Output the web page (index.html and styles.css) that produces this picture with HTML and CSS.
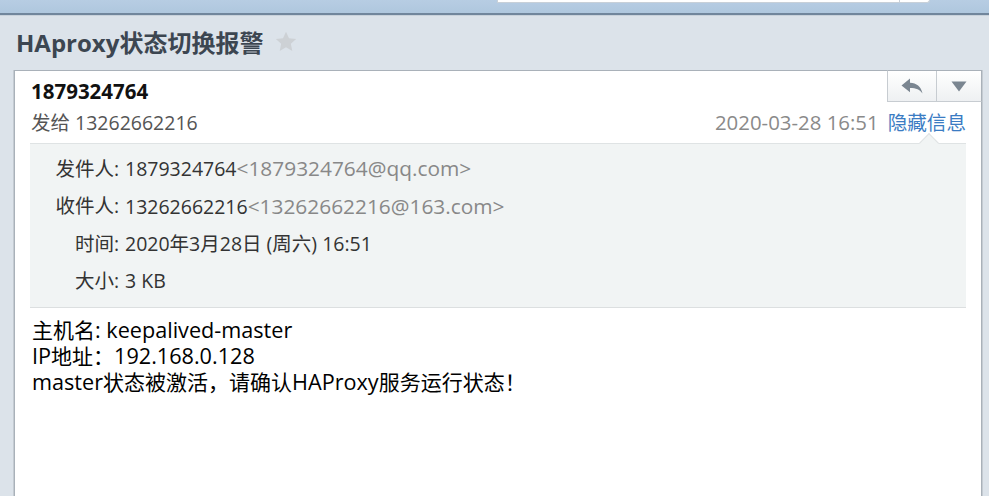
FILE: index.html
```html
<!DOCTYPE html>
<html lang="zh-CN">
<head>
<meta charset="utf-8">
<title>HAproxy状态切换报警</title>
<link rel="stylesheet" href="styles.css">
</head>
<body>
<div class="topbar">
  <div class="search"><span class="search-btn"></span></div>
</div>
<div class="subject-row">
  <h1 class="subject">HAproxy状态切换报警</h1>
  <svg class="star" width="22" height="21" viewBox="0 0 24 23"><path d="M12 0.8l3.3 7.1 7.8 0.9-5.8 5.3 1.6 7.7L12 17.9l-6.9 3.9 1.6-7.7L0.9 8.8l7.8-0.9z" fill="#cdd1d5"/></svg>
</div>
<div class="card">
  <div class="actions">
    <span class="act act-reply">
      <svg width="22" height="16" viewBox="0 0 22 16"><path d="M0.5 7.5L9 0.5v4.2c6.5 0.3 11 3.6 12.5 10.8-2.6-4-6.4-5.6-12.5-5.6v4.3z" fill="#7b8691"/></svg>
    </span>
    <span class="act act-more">
      <svg width="16" height="11" viewBox="0 0 16 11"><path d="M0.5 0.5h15L8 10.5z" fill="#7b8691"/></svg>
    </span>
  </div>
  <div class="from">1879324764</div>
  <div class="meta">
    <span class="to">发给 13262662216</span>
    <span class="meta-right"><span class="date">2020-03-28 16:51</span><a class="toggle">隐藏信息</a></span>
  </div>
  <div class="details">
    <span class="pointer"></span>
    <div class="row"><span class="lbl">发件人:</span><span class="val">1879324764<span class="addr">&lt;1879324764@qq.com&gt;</span></span></div>
    <div class="row"><span class="lbl">收件人:</span><span class="val">13262662216<span class="addr">&lt;13262662216@163.com&gt;</span></span></div>
    <div class="row"><span class="lbl">时间:</span><span class="val">2020年3月28日 (周六) 16:51</span></div>
    <div class="row"><span class="lbl">大小:</span><span class="val">3 KB</span></div>
  </div>
  <div class="content">
    <div>主机名<span class="en">: keepalived-master</span></div>
    <div><span class="en">IP</span>地址：<span class="en">192.168.0.128</span></div>
    <div><span class="en">master</span>状态被激活，请确认<span class="en">HAProxy</span>服务运行状态！</div>
  </div>
</div>
</body>
</html>
```
FILE: styles.css
```css
* { box-sizing: border-box; }
html, body { height: 100%; }
body {
  margin: 0;
  background: #dce3ea;
  font-family: "Open Sans", "Noto Sans CJK SC", sans-serif;
  overflow: hidden;
  display: flex;
  flex-direction: column;
}
.topbar {
  height: 15px;
  flex: none;
  background: linear-gradient(#b7cde3, #afc7de);
  border-bottom: 2px solid #71869c;
  box-shadow: 0 1px 0 #c9d2db;
  display: flex;
}
.search {
  margin-left: 497px;
  width: 433px;
  height: 3px;
  background: #fff;
  border: 1px solid #c8d0d8;
  border-top: none;
  border-radius: 0 0 4px 0;
  display: flex;
  justify-content: flex-end;
}
.search-btn {
  width: 30px;
  border-left: 1px solid #c8d0d8;
}
.subject-row {
  flex: none;
  height: 55px;
  display: flex;
  align-items: center;
  padding-left: 16px;
  padding-bottom: 2px;
}
.subject {
  margin: 0;
  font-size: 24px;
  font-weight: bold;
  color: #3c4651;
}
.star { margin-left: 12px; }
.card {
  position: relative;
  flex: 1;
  margin: 0 7px 0 14px;
  background: #fff;
  border: 1px solid #a9b1b9;
  border-bottom: none;
  box-shadow: 1px 0 0 #c4cbd2, -1px 0 0 #c4cbd2;
}
.actions {
  position: absolute;
  top: -1px;
  right: -1px;
  display: flex;
  height: 32px;
  border: 1px solid #c7ccd1;
  border-top-color: #a9b1b9;
  border-right-color: #a9b1b9;
  background: linear-gradient(#ffffff, #eef0f2);
}
.act {
  display: flex;
  align-items: center;
  justify-content: center;
}
.act-reply { width: 49px; border-right: 1px solid #c7ccd1; }
.act-more { width: 44px; }
.from {
  padding: 8px 0 0 16px;
  font-size: 20.5px;
  font-weight: bold;
  color: #111;
  line-height: 24px;
}
.meta {
  display: flex;
  justify-content: space-between;
  align-items: baseline;
  padding: 6px 15px 0 16px;
  font-size: 19.5px;
  line-height: 26px;
  height: 40px;
}
.to { color: #555; }
.date { color: #8a8a8a; margin-right: 9px; font-size: 20.4px; }
.toggle { color: #3b7cc3; font-size: 19.6px; }
.details {
  position: relative;
  margin: 0 15px;
  background: #f1f4f4;
  border-top: 1px solid #dfe3e4;
  border-bottom: 1px solid #dcdfe0;
  padding: 6px 0 7px;
  font-size: 19.5px;
  line-height: 26px;
  color: #333;
}
.pointer {
  position: absolute;
  top: -8px;
  right: 30px;
  width: 14px;
  height: 14px;
  background: #f1f4f4;
  border-top: 1px solid #dfe3e4;
  border-left: 1px solid #dfe3e4;
  transform: rotate(45deg);
}
.row {
  display: flex;
  height: 37.5px;
  align-items: center;
}
.lbl {
  width: 89px;
  text-align: right;
  flex: none;
}
.val { margin-left: 6px; }
.addr { color: #888; font-size: 1.07em; }
.content {
  padding: 9px 17px;
  font-size: 21px;
  line-height: 26px;
  color: #000;
}
.content .en { font-size: 1.03em; }
```
